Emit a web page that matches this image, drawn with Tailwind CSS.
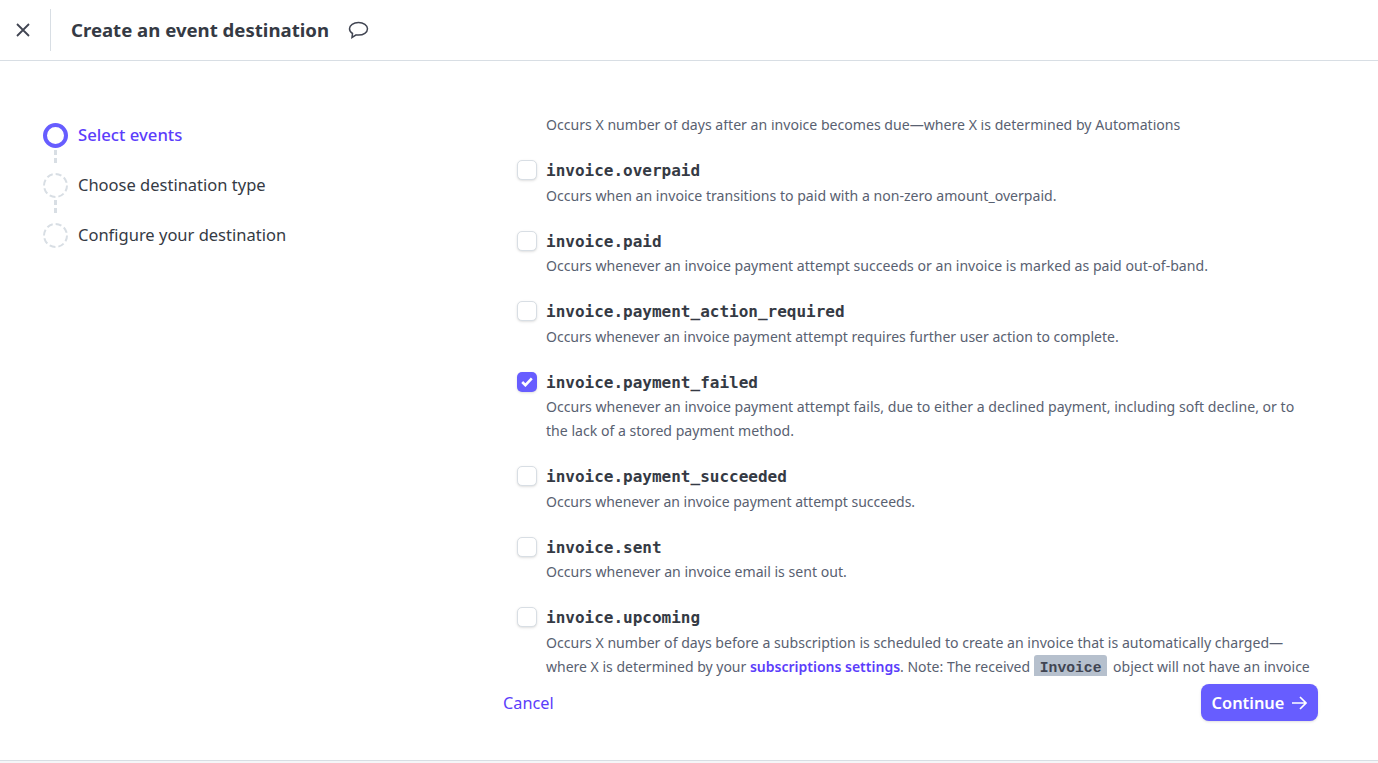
<!DOCTYPE html>
<html lang="en">
<head>
  <meta charset="UTF-8">
  <title>Create an event destination</title>
  <script src="https://cdn.jsdelivr.net/npm/@tailwindcss/browser@4"></script>
</head>
<body class="bg-white text-[#353a44] font-['Noto_Sans',sans-serif] h-[763px] overflow-hidden">

  <!-- Header -->
  <header class="h-[61px] border-b border-[#d8dee4] flex items-center">
    <button class="w-[51px] h-[42px] border-r border-[#d8dee4] flex items-center pl-[15px]">
      <svg width="16" height="16" viewBox="0 0 16 16" fill="none" stroke="#414552" stroke-width="1.8"><path d="M2 2l12 12M14 2L2 14"/></svg>
    </button>
    <h1 class="ml-5 text-[18.6px] font-bold text-[#353a44]">Create an event destination</h1>
    <svg class="ml-[19px]" width="21" height="19" viewBox="0 0 21 19" fill="none" stroke="#414552" stroke-width="1.5"><path d="M10.5 1.500c-5 0-9 2.600-9 6.300 0 2 1.200 3.600 3 4.700l-.5 4 4.200-2.600c.7.1 1.500.2 2.300.2 5 0 9-2.700 9-6.300s-4-6.300-9-6.300z"/></svg>
  </header>

  <main class="flex h-[699px]">
    <!-- Stepper -->
    <nav class="w-[503px] pl-[43px] pt-[61px] shrink-0">
      <div class="flex items-center h-[26px] gap-[10px]">
        <span class="w-[25px] h-[25px] rounded-full border-[4px] border-[#675dff]"></span>
        <span class="text-[16.7px] font-medium text-[#5b3dfb]">Select events</span>
      </div>
      <svg class="ml-[11px] block" width="3" height="24"><path d="M1.500 2v5M1.500 10v5" stroke="#d8dee4" stroke-width="3"/></svg>
      <div class="flex items-center h-[26px] gap-[10px]">
        <svg width="25" height="25"><circle cx="12.500" cy="12.500" r="11.500" fill="none" stroke="#d8dee4" stroke-width="2" stroke-dasharray="6 3"/></svg>
        <span class="text-[16.5px]">Choose destination type</span>
      </div>
      <svg class="ml-[11px] block" width="3" height="24"><path d="M1.500 2v5M1.500 10v5" stroke="#d8dee4" stroke-width="3"/></svg>
      <div class="flex items-center h-[26px] gap-[10px]">
        <svg width="25" height="25"><circle cx="12.500" cy="12.500" r="11.500" fill="none" stroke="#d8dee4" stroke-width="2" stroke-dasharray="6 3"/></svg>
        <span class="text-[16.5px]">Configure your destination</span>
      </div>
    </nav>

    <!-- Events -->
    <section class="flex-1 pr-[60px]">
      <div class="h-[556px] mt-[59px] overflow-hidden pl-[14px] text-[14.1px] leading-[24px] text-[#596171]">
        <p class="-mt-[7px] mb-[22px] pl-[29px]">Occurs X number of days after an invoice becomes due—where X is determined by Automations</p>

        <div class="flex gap-[9px] mb-[22px]">
          <span class="mt-[1px] w-5 h-5 shrink-0 rounded-[5px] bg-white border border-[#d8dee4] shadow-sm"></span>
          <div class="w-[766px]">
            <div class="h-[24.5px] font-['DejaVu_Sans_Mono',monospace] font-bold text-[16px] text-[#353a44]">invoice.overpaid</div>
            <p>Occurs when an invoice transitions to paid with a non-zero amount_overpaid.</p>
          </div>
        </div>
        <div class="flex gap-[9px] mb-[22px]">
          <span class="mt-[1px] w-5 h-5 shrink-0 rounded-[5px] bg-white border border-[#d8dee4] shadow-sm"></span>
          <div class="w-[766px]">
            <div class="h-[24.5px] font-['DejaVu_Sans_Mono',monospace] font-bold text-[16px] text-[#353a44]">invoice.paid</div>
            <p>Occurs whenever an invoice payment attempt succeeds or an invoice is marked as paid out-of-band.</p>
          </div>
        </div>
        <div class="flex gap-[9px] mb-[22px]">
          <span class="mt-[1px] w-5 h-5 shrink-0 rounded-[5px] bg-white border border-[#d8dee4] shadow-sm"></span>
          <div class="w-[766px]">
            <div class="h-[24.5px] font-['DejaVu_Sans_Mono',monospace] font-bold text-[16px] text-[#353a44]">invoice.payment_action_required</div>
            <p class="text-[14px]">Occurs whenever an invoice payment attempt requires further user action to complete.</p>
          </div>
        </div>
        <div class="flex gap-[9px] mb-[22px]">
          <span class="mt-[1px] w-5 h-5 shrink-0 rounded-[5px] bg-[#675dff] shadow-sm flex items-center justify-center">
            <svg width="12" height="10" viewBox="0 0 12 10" fill="none" stroke="#fff" stroke-width="2.6"><path d="M1.200 5l3.200 3.200 6.400-6.800"/></svg>
          </span>
          <div class="w-[766px]">
            <div class="h-[24.5px] font-['DejaVu_Sans_Mono',monospace] font-bold text-[16px] text-[#353a44]">invoice.payment_failed</div>
            <p>Occurs whenever an invoice payment attempt fails, due to either a declined payment, including soft decline, or to the lack of a stored payment method.</p>
          </div>
        </div>
        <div class="flex gap-[9px] mb-[22px]">
          <span class="mt-[1px] w-5 h-5 shrink-0 rounded-[5px] bg-white border border-[#d8dee4] shadow-sm"></span>
          <div class="w-[766px]">
            <div class="h-[24.5px] font-['DejaVu_Sans_Mono',monospace] font-bold text-[16px] text-[#353a44]">invoice.payment_succeeded</div>
            <p class="text-[14px]">Occurs whenever an invoice payment attempt succeeds.</p>
          </div>
        </div>
        <div class="flex gap-[9px] mb-[22px]">
          <span class="mt-[1px] w-5 h-5 shrink-0 rounded-[5px] bg-white border border-[#d8dee4] shadow-sm"></span>
          <div class="w-[766px]">
            <div class="h-[24.5px] font-['DejaVu_Sans_Mono',monospace] font-bold text-[16px] text-[#353a44]">invoice.sent</div>
            <p>Occurs whenever an invoice email is sent out.</p>
          </div>
        </div>
        <div class="flex gap-[9px]">
          <span class="mt-[1px] w-5 h-5 shrink-0 rounded-[5px] bg-white border border-[#d8dee4] shadow-sm"></span>
          <div class="w-[766px]">
            <div class="h-[24.5px] font-['DejaVu_Sans_Mono',monospace] font-bold text-[16px] text-[#353a44]">invoice.upcoming</div>
            <p class="text-[14px]"><span class="text-[14.1px]">Occurs X number of days before a subscription is scheduled to create an invoice that is automatically charged—</span>where X is determined by your <a class="font-semibold text-[#5b3dfb]">subscriptions settings</a>. Note: The received <code class="mr-[2px] bg-[#b6c0cd] rounded-[3px] px-[6px] py-[5px] font-['Liberation_Mono',monospace] font-bold text-[14.7px] text-[#414552]">Invoice</code> object will not have an invoice</p>
          </div>
        </div>
      </div>

      <!-- Footer actions -->
      <div class="flex items-center justify-between mt-[8px]">
        <a class="mt-[2px] text-[16.3px] text-[#5b3dfb]">Cancel</a>
        <button class="h-[37px] w-[117px] rounded-lg bg-[#675dff] text-white font-semibold text-[16.4px] flex items-center justify-center gap-[7px] shadow-sm">
          <span class="mt-[2px]">Continue</span>
          <svg width="16" height="14" viewBox="0 0 16 14" fill="none" stroke="#fff" stroke-width="1.7"><path d="M1 7h14M9 1l6 6-6 6"/></svg>
        </button>
      </div>
    </section>
  </main>

  <div class="h-[3px] bg-[#f5f6f8] border-t border-[#d8dee4]"></div>
</body>
</html>
